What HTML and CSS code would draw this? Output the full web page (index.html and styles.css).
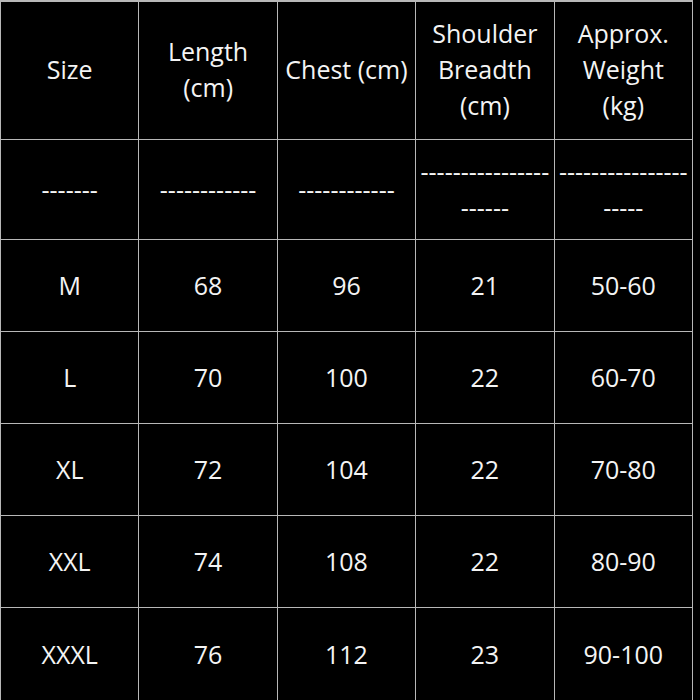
FILE: index.html
```html
<!DOCTYPE html>
<html>
<head>
<meta charset="utf-8">
<link rel="stylesheet" href="styles.css">
</head>
<body>
<table class="size-table">
  <colgroup>
    <col class="col"><col class="col"><col class="col"><col class="col"><col class="col">
  </colgroup>
  <tr class="row-head">
    <td>Size</td>
    <td>Length<br>(cm)</td>
    <td>Chest (cm)</td>
    <td>Shoulder<br>Breadth<br>(cm)</td>
    <td>Approx.<br>Weight<br>(kg)</td>
  </tr>
  <tr class="row-sep">
    <td>-------</td>
    <td>------------</td>
    <td>------------</td>
    <td>----------------<br>------</td>
    <td>----------------<br>-----</td>
  </tr>
  <tr class="row-data"><td>M</td><td>68</td><td>96</td><td>21</td><td>50-60</td></tr>
  <tr class="row-data"><td>L</td><td>70</td><td>100</td><td>22</td><td>60-70</td></tr>
  <tr class="row-data"><td>XL</td><td>72</td><td>104</td><td>22</td><td>70-80</td></tr>
  <tr class="row-data"><td>XXL</td><td>74</td><td>108</td><td>22</td><td>80-90</td></tr>
  <tr class="row-last"><td>XXXL</td><td>76</td><td>112</td><td>23</td><td>90-100</td></tr>
</table>
</body>
</html>
```

FILE: styles.css
```css
html, body {
  margin: 0;
  padding: 0;
  background: #000;
  overflow: hidden;
}

.size-table {
  border-collapse: collapse;
  table-layout: fixed;
  width: 693px;
  font-family: "Open Sans", "Noto Sans", sans-serif;
  font-size: 25px;
  line-height: 36px;
  color: #f4f4f4;
}

.size-table td {
  border: 1.5px solid #b8b8b8;
  text-align: center;
  vertical-align: middle;
  padding: 0 0 2px;
  white-space: nowrap;
  overflow: hidden;
}

.size-table tr:first-child td {
  border-top-width: 2px;
}

.row-head td { height: 134px; padding-bottom: 3px; }
.row-sep td { height: 97px; }
.row-data td { height: 89px; }
.row-last td { height: 92px; }
```
